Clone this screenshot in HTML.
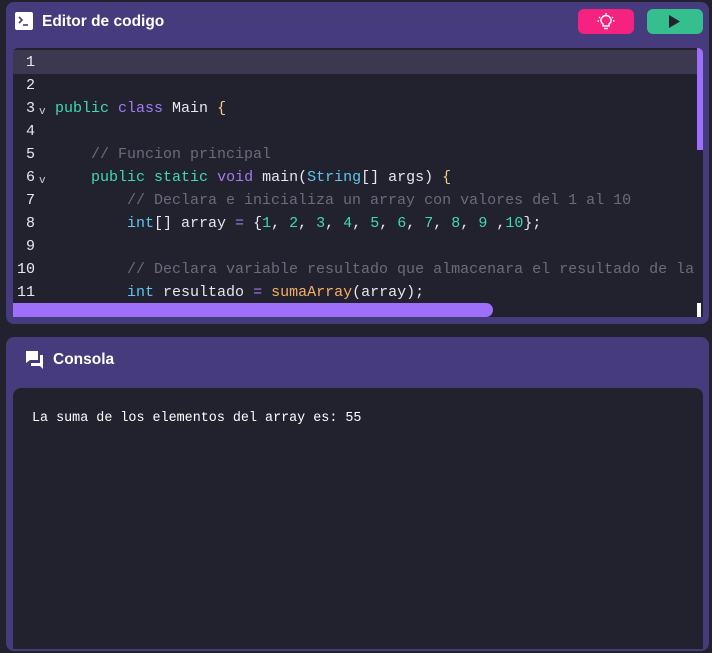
<!DOCTYPE html>
<html><head><style>
*{margin:0;padding:0;box-sizing:border-box}
body{width:712px;height:653px;background:#22212e;position:relative;overflow:hidden;font-family:"Liberation Sans",sans-serif}
.panel{position:absolute;left:6px;width:703px;background:#463b7c;border-radius:8px}
.title{position:absolute;color:#fff;font-weight:bold;font-size:15.5px}
.code{position:absolute;left:13px;top:48px;width:690px;height:269px;background:#22212e;border-radius:5px 5px 0 0;overflow:hidden;font-family:"Liberation Mono",monospace;font-size:15px}
.ln{position:absolute;left:0;width:690px;height:23px;line-height:23px;white-space:pre;color:#e6e6ee}
.n{position:absolute;left:0;width:22px;text-align:right;color:#e8e8f0}
.f{position:absolute;left:26px;top:4px;font-size:11px;color:#ccc}
.c{position:absolute;left:42px}
.k{color:#3ddbb0}.p{color:#a07cf0}.cm{color:#6c6b7d}.s{color:#5fc7ef}.num{color:#3ddbb0}.fn{color:#f4b066}.b{color:#f0d080}
.btn{position:absolute;top:9px;width:56px;height:25px;border-radius:6px}
</style></head><body>
<div class="panel" style="top:2px;height:322px"></div>
<svg style="position:absolute;left:15px;top:12px" width="18" height="18" viewBox="0 0 18 18"><rect width="18" height="18" rx="2" fill="#fff"/><path d="M4 5l3 3-3 3" stroke="#463b7c" stroke-width="1.6" fill="none"/><path d="M8 13h5" stroke="#463b7c" stroke-width="1.6"/></svg>
<div class="title" style="left:42px;top:13px">Editor de codigo</div>
<div class="btn" style="left:578px;background:#f5237f"></div>
<svg style="position:absolute;left:596px;top:12px" width="20" height="20" viewBox="0 0 20 20" fill="none" stroke="#fff" stroke-width="1.4"><path d="M7 12c-1.5-1-2-2.5-2-3.5a5 5 0 0 1 10 0c0 1-.5 2.5-2 3.5v2h-6z"/><path d="M8 16.5h4"/><path d="M10 1v1.5M3 5l1 1M17 5l-1 1M1.5 9h1.5M17 9h1.5"/></svg>
<div class="btn" style="left:647px;background:#35bf8f"></div>
<svg style="position:absolute;left:668px;top:14px" width="14" height="15"><path d="M1 1l11 6.5L1 14z" fill="#22212e"/></svg>
<div class="code">
<div style="position:absolute;left:0;top:2px;width:684px;height:24px;background:#3b3850"></div>
<div class="ln" style="top:3px"><span class="n">1</span></div>
<div class="ln" style="top:26px"><span class="n">2</span></div>
<div class="ln" style="top:49px"><span class="n">3</span><span class="f">v</span><span class="c"><span class="k">public</span> <span class="p">class</span> Main <span class="b">{</span></span></div>
<div class="ln" style="top:72px"><span class="n">4</span></div>
<div class="ln" style="top:95px"><span class="n">5</span><span class="c">    <span class="cm">// Funcion principal</span></span></div>
<div class="ln" style="top:118px"><span class="n">6</span><span class="f">v</span><span class="c">    <span class="k">public</span> <span class="k">static</span> <span class="p">void</span> main(<span class="s">String</span>[] args) <span class="b">{</span></span></div>
<div class="ln" style="top:141px"><span class="n">7</span><span class="c">        <span class="cm">// Declara e inicializa un array con valores del 1 al 10</span></span></div>
<div class="ln" style="top:164px"><span class="n">8</span><span class="c">        <span class="s">int</span>[] array <span class="p">=</span> {<span class="num">1</span>, <span class="num">2</span>, <span class="num">3</span>, <span class="num">4</span>, <span class="num">5</span>, <span class="num">6</span>, <span class="num">7</span>, <span class="num">8</span>, <span class="num">9</span> ,<span class="num">10</span>};</span></div>
<div class="ln" style="top:187px"><span class="n">9</span></div>
<div class="ln" style="top:210px"><span class="n">10</span><span class="c">        <span class="cm">// Declara variable resultado que almacenara el resultado de la</span></span></div>
<div class="ln" style="top:233px"><span class="n">11</span><span class="c">        <span class="s">int</span> resultado <span class="p">=</span> <span class="fn">sumaArray</span>(array);</span></div>
<div style="position:absolute;left:684px;top:0;width:6px;height:102px;background:#9d6ffa"></div>
<div style="position:absolute;left:0;top:255px;width:480px;height:14px;background:#9d6ffa;border-radius:0 7px 7px 0"></div>
<div style="position:absolute;left:684px;top:255px;width:4px;height:14px;background:#fff"></div>
</div>
<div class="panel" style="top:337px;height:314px"></div>
<svg style="position:absolute;left:25px;top:350px" width="20" height="20" viewBox="0 0 20 20" fill="#fff"><path d="M1 1h12v9H5l-4 3z"/><path d="M15 5h3v14l-3-3H6v-3h9z"/></svg>
<div class="title" style="left:53px;top:351px">Consola</div>
<div style="position:absolute;left:13px;top:388px;width:690px;height:261px;background:#22212e;border-radius:8px 8px 0 0"></div>
<div style="position:absolute;left:32px;top:411px;color:#fff;font-family:'Liberation Mono',monospace;font-size:13.4px">La suma de los elementos del array es: 55</div>
</body></html>
